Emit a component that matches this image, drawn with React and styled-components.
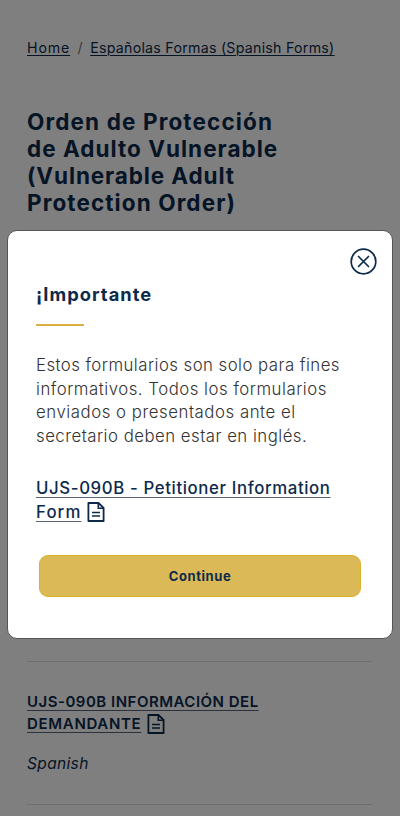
import React from 'react';
import styled, { createGlobalStyle } from 'styled-components';

const GlobalStyle = createGlobalStyle`
  * {
    box-sizing: border-box;
  }
  body {
    margin: 0;
    background: #fff;
    color: #0d2a4c;
    font-family: Inter, "Open Sans", sans-serif;
    overflow: hidden;
  }
`;

const Page = styled.main`
  height: 816px;
  padding: 37px 28px 0 27px;
  display: flex;
  flex-direction: column;
  overflow: hidden;
`;

// each line carries its own tracking
const Line = styled.span`
  display: block;
  width: max-content;
  white-space: nowrap;
  letter-spacing: ${({ $track }) => $track || 0}px;
`;

const Breadcrumb = styled.nav`
  display: flex;
  height: 22px;
  line-height: 22px;
  font-size: 14.2px;
`;

const Crumb = styled.a`
  color: #0d2a4c;
  white-space: nowrap;
  letter-spacing: ${({ $track }) => $track}px;
  text-decoration: underline;
  text-decoration-thickness: 1px;
  text-underline-offset: 2px;
`;

const Slash = styled.span`
  width: 20px;
  text-align: center;
  color: #6c757d;
`;

const Title = styled.h1`
  margin: 49px 0 0;
  height: 108px;
  font-size: 22.5px;
  font-weight: 700;
  line-height: 27px;
`;

const FormItem = styled.section`
  margin-top: ${({ $top }) => $top}px;
  height: 143px;
  padding-top: 29px;
  border-top: 1px solid #dedede;
`;

const Divider = styled.hr`
  width: 100%;
  margin: 0;
  border: 0;
  border-top: 1px solid #dedede;
`;

const FormLink = styled.a`
  display: block;
  color: #0d2a4c;
  text-decoration: none;
  font-size: ${({ $size }) => $size}px;
  font-weight: ${({ $weight }) => $weight};
  line-height: ${({ $leading }) => $leading}px;
`;

const LinkRow = styled.span`
  display: flex;
  align-items: center;
  gap: 6px;
  height: ${({ $height }) => $height}px;
`;

const Underlined = styled(Line)`
  text-decoration: underline;
  text-decoration-color: #56657c;
  text-decoration-thickness: 1px;
  text-decoration-skip-ink: none;
  text-underline-offset: 3px;
`;

const Language = styled.p`
  margin: 18px 0 0;
  font-size: 15.5px;
  font-style: italic;
  line-height: 22px;
`;

const Overlay = styled.div`
  position: fixed;
  inset: 0;
  display: flex;
  justify-content: center;
  align-items: flex-start;
  padding: 230px 7px 0;
  background: rgba(0, 0, 0, 0.5);
`;

const Modal = styled.div`
  width: 386px;
  height: 409px;
  padding: 17px 15px 0 28px;
  display: flex;
  flex-direction: column;
  background: #fff;
  border: 1px solid #555;
  border-radius: 10px;
`;

const CloseButton = styled.button`
  align-self: flex-end;
  display: flex;
  width: 27px;
  height: 27px;
  padding: 0;
  border: 0;
  background: none;
  color: #0d2a4c;
`;

const ModalTitle = styled.h2`
  margin: 7px 0 0;
  font-size: 18.3px;
  font-weight: 700;
  line-height: 24px;

  &::after {
    content: "";
    display: block;
    width: 48px;
    height: 2px;
    margin-top: 18px;
    background: #dab040;
  }
`;

const Message = styled.p`
  margin: 28px 0 27.6px;
  color: #333;
  font-size: 16.8px;
  font-weight: 300;
  line-height: 23.6px;
`;

const Continue = styled.button`
  width: 322px;
  height: 42px;
  margin: 31.4px 0 0 3px;
  padding: 0;
  display: flex;
  justify-content: center;
  align-items: center;
  border: 1px solid #dab12b;
  border-radius: 9px;
  background: #dab956;
  color: #0d2a4c;
  font-family: inherit;
  font-size: 13px;
  font-weight: 700;
`;

const CloseIcon = () => (
  <svg width="27" height="27" viewBox="0 0 27 27" fill="none" stroke="currentColor">
    <circle cx="13.5" cy="13.5" r="12.3" strokeWidth="1.7" />
    <path d="M8.5 8.5l10 10M18.5 8.5l-10 10" strokeWidth="1.7" strokeLinecap="round" />
  </svg>
);

const DocIcon = () => (
  <svg width="18" height="20" viewBox="0 0 18 20" fill="none" stroke="currentColor" strokeWidth="1.8">
    <path d="M2.2 1h9.3L16.6 6v13H1.4V1z" strokeLinejoin="round" />
    <path d="M11.3 1.2v5h5" strokeWidth="1.6" />
    <path d="M5 10.5h8M5 14h8" strokeWidth="1.6" />
  </svg>
);

const App = () => {
  return (
    <>
      <GlobalStyle />
      <Page>
        <Breadcrumb>
          <Crumb href="#" $track={0.85}>Home</Crumb>
          <Slash>/</Slash>
          <Crumb href="#" $track={0.26}>Españolas Formas (Spanish Forms)</Crumb>
        </Breadcrumb>
        <Title>
          <Line $track={1.13}>Orden de Protección</Line>
          <Line $track={1.02}>de Adulto Vulnerable</Line>
          <Line $track={0.88}>(Vulnerable Adult</Line>
          <Line $track={1.1}>Protection Order)</Line>
        </Title>
        <FormItem $top={445}>
          <FormLink href="#" $size={15} $weight={600} $leading={22}>
            <Underlined $track={0.5}>UJS-090B INFORMACIÓN DEL</Underlined>
            <LinkRow $height={22}>
              <Underlined $track={0.68}>DEMANDANTE</Underlined>
              <DocIcon />
            </LinkRow>
          </FormLink>
          <Language>
            <Line $track={0.35}>Spanish</Line>
          </Language>
        </FormItem>
        <Divider />
      </Page>
      <Overlay>
        <Modal role="dialog" aria-modal="true">
          <CloseButton aria-label="Close">
            <CloseIcon />
          </CloseButton>
          <ModalTitle>
            <Line $track={1.05}>¡Importante</Line>
          </ModalTitle>
          <Message>
            <Line $track={0.45}>Estos formularios son solo para fines</Line>
            <Line $track={0.51}>informativos. Todos los formularios</Line>
            <Line $track={0.54}>enviados o presentados ante el</Line>
            <Line $track={0.48}>secretario deben estar en inglés.</Line>
          </Message>
          <FormLink href="#" $size={16.8} $weight={500} $leading={24}>
            <Underlined $track={0.62}>UJS-090B - Petitioner Information</Underlined>
            <LinkRow $height={24}>
              <Underlined $track={1.1}>Form</Underlined>
              <DocIcon />
            </LinkRow>
          </FormLink>
          <Continue>
            <Line $track={0.57}>Continue</Line>
          </Continue>
        </Modal>
      </Overlay>
    </>
  );
};

export default App;
